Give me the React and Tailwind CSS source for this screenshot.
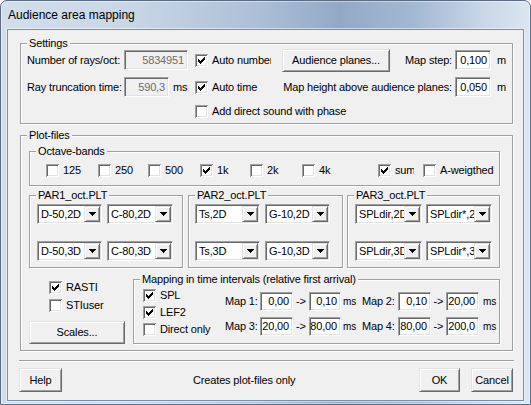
import React from "react";

const SUNKEN =
  "border border-[#a0a0a0] border-r-white border-b-white shadow-[inset_1px_1px_0_#696969,inset_-1px_-1px_0_#e3e3e3]";
const RAISED =
  "border border-[#e3e3e3] border-r-[#696969] border-b-[#696969] shadow-[inset_1px_1px_0_#ffffff,inset_-1px_-1px_0_#a0a0a0]";

const CHECK =
  "M9 3h1v1H9zM8 4h2v1H8zM3 5h1v1H3zM7 5h3v1H7zM3 6h2v1H3zM6 6h3v1H6zM3 7h5v1H3zM4 8h3v1H4zM5 9h1v1H5z";

function Box({ checked }) {
  return (
    <svg width="13" height="13" viewBox="0 0 13 13" shapeRendering="crispEdges" className="block shrink-0">
      <rect width="13" height="13" fill="#ffffff" />
      <path d="M0 0h13v1H1v12H0z" fill="#a0a0a0" />
      <path d="M1 1h11v1H2v10H1z" fill="#696969" />
      <path d="M11 2h1v10H2v-1h9z" fill="#e3e3e3" />
      {checked && <path d={CHECK} fill="#000000" />}
    </svg>
  );
}

function Chk({ checked, label, className = "", labelClass = "" }) {
  return (
    <div className={"flex items-center shrink-0 " + className}>
      <Box checked={checked} />
      <span className={"ml-[4px] whitespace-nowrap leading-[13px] " + labelClass}>{label}</span>
    </div>
  );
}

function Edit({ value, className = "" }) {
  return (
    <div
      className={
        SUNKEN +
        " flex items-center justify-end pr-[3px] leading-[13px] whitespace-nowrap overflow-hidden shrink-0 " +
        className
      }
    >
      {value}
    </div>
  );
}

function Arrow() {
  return (
    <svg width="7" height="4" viewBox="0 0 7 4" shapeRendering="crispEdges" className="block">
      <path d="M0 0h7v1H0zM1 1h5v1H1zM2 2h3v1H2zM3 3h1v1H3z" fill="#000000" />
    </svg>
  );
}

function Combo({ text, className = "" }) {
  return (
    <div className={SUNKEN + " flex h-[20px] bg-white p-[1px] shrink-0 " + className}>
      <div className="flex-1 overflow-hidden whitespace-nowrap pl-[2px] leading-[16px]">{text}</div>
      <div className={RAISED + " w-[16px] h-[16px] flex items-center justify-center bg-[#f0f0f0] shrink-0"}>
        <Arrow />
      </div>
    </div>
  );
}

function Button({ children, className = "" }) {
  return (
    <div
      className={
        RAISED + " flex items-center justify-center bg-[#f0f0f0] shrink-0 leading-[13px] whitespace-nowrap " + className
      }
    >
      {children}
    </div>
  );
}

function Group({ label, className = "", children }) {
  return (
    <div
      className={
        "relative shrink-0 border border-[#a0a0a0] shadow-[1px_1px_0_#ffffff,inset_1px_1px_0_#ffffff] " + className
      }
    >
      <span className="absolute left-[6px] top-[-7px] bg-[#f0f0f0] px-[2px] leading-[13px] whitespace-nowrap">
        {label}
      </span>
      {children}
    </div>
  );
}

function MapRow({ a, b, c, d, e, f }) {
  return (
    <div className="flex items-center h-[19px] whitespace-nowrap">
      <span className="w-[35px] shrink-0">{a}</span>
      <Edit value={b} className="w-[33px] h-[19px] bg-white" />
      <span className="w-[16px] text-center shrink-0">-&gt;</span>
      <Edit value={c} className="w-[32px] h-[19px] bg-white" />
      <span className="w-[21px] pl-[2px] shrink-0 text-[10px]">ms</span>
      <span className="w-[36px] shrink-0">{d}</span>
      <Edit value={e} className="w-[33px] h-[19px] bg-white" />
      <span className="w-[15px] text-center shrink-0">-&gt;</span>
      <Edit value={f} className="w-[33px] h-[19px] bg-white" />
      <span className="pl-[4px] shrink-0 text-[10px]">ms</span>
    </div>
  );
}

export default function App() {
  return (
    <div className="w-[531px] h-[405px] bg-white text-[11px] leading-[13px] tracking-[-0.15px] text-black font-['Liberation_Sans',Arial,sans-serif]">
      <div className="w-[531px] h-[405px] rounded-t-[7px] border border-[#5b6b82] shadow-[inset_0_0_0_1px_rgba(255,255,255,0.45)] bg-[linear-gradient(90deg,#d3deeb_0%,#c8d6e6_25%,#adc0d7_48%,#92a9c6_64%,#a3b8d2_78%,#c8d6e7_91%,#dce6f1_100%)] px-[6px] pb-[3px] flex flex-col">
        <div className="h-[28px] flex items-center pl-[1px] text-[12px] leading-[15px] tracking-normal text-[#000000] whitespace-nowrap">
          Audience area mapping
        </div>
        <div className="h-[372px] border border-[#7c8ea6] shadow-[0_0_0_1px_rgba(255,255,255,0.5)] bg-[#f0f0f0] flex flex-col pt-[13px]">
          {/* Settings */}
          <Group label="Settings" className="ml-[12px] w-[493px] h-[81px]">
            <div className="flex items-center h-[24px] mt-[4px] pl-[6px] whitespace-nowrap">
              <span className="w-[97px] shrink-0">Number of rays/oct:</span>
              <Edit value="5834951" className="w-[64px] h-[20px] bg-[#f0f0f0] text-[#6d6d6d]" />
              <div className="ml-[7px] w-[76px] overflow-hidden shrink-0">
                <Chk checked label="Auto number" />
              </div>
              <Button className="ml-[11px] w-[108px] h-[23px]">Audience planes...</Button>
              <span className="w-[65px] flex justify-end pr-[3px] shrink-0">Map step:</span>
              <Edit value="0,100" className="w-[36px] h-[20px] bg-white" />
              <span className="ml-[6px] shrink-0">m</span>
            </div>
            <div className="flex items-center h-[20px] mt-[5px] pl-[6px] whitespace-nowrap">
              <span className="w-[97px] shrink-0">Ray truncation time:</span>
              <Edit value="590,3" className="w-[45px] h-[20px] bg-[#f0f0f0] text-[#6d6d6d]" />
              <span className="w-[26px] pl-[4px] shrink-0">ms</span>
              <Chk checked label="Auto time" className="w-[87px]" />
              <span className="w-[173px] flex justify-end pr-[3px] shrink-0">Map height above audience planes:</span>
              <Edit value="0,050" className="w-[36px] h-[20px] bg-white" />
              <span className="ml-[6px] shrink-0">m</span>
            </div>
            <div className="flex items-center h-[16px] mt-[6px] pl-[174px]">
              <Chk label="Add direct sound with phase" />
            </div>
          </Group>

          {/* Plot-files */}
          <Group label="Plot-files" className="ml-[12px] mt-[11px] w-[493px] h-[216px]">
            <Group label="Octave-bands" className="ml-[8px] mt-[15px] w-[471px] h-[35px]">
              <div className="flex items-center h-[13px] mt-[12px] pl-[16px]">
                <Chk label="125" className="w-[52px]" />
                <Chk label="250" className="w-[50px]" />
                <Chk label="500" className="w-[52px]" />
                <Chk checked label="1k" className="w-[50px]" />
                <Chk label="2k" className="w-[52px]" />
                <Chk label="4k" className="w-[76px]" />
                <Chk checked label="sum" className="w-[45px]" labelClass="w-[19px] overflow-hidden" />
                <Chk label="A-weigthed" />
              </div>
            </Group>

            <div className="flex ml-[8px] mt-[9px] h-[73px]">
              <Group label="PAR1_oct.PLT" className="w-[154px] h-[73px]">
                <div className="flex mt-[8px] pl-[7px]">
                  <Combo text="D-50,2D" className="w-[65px]" />
                  <Combo text="C-80,2D" className="ml-[5px] w-[66px]" />
                </div>
                <div className="flex mt-[17px] pl-[7px]">
                  <Combo text="D-50,3D" className="w-[65px]" />
                  <Combo text="C-80,3D" className="ml-[5px] w-[66px]" />
                </div>
              </Group>
              <Group label="PAR2_oct.PLT" className="ml-[5px] w-[155px] h-[73px]">
                <div className="flex mt-[8px] pl-[6px]">
                  <Combo text="Ts,2D" className="w-[65px]" />
                  <Combo text="G-10,2D" className="ml-[5px] w-[65px]" />
                </div>
                <div className="flex mt-[17px] pl-[6px]">
                  <Combo text="Ts,3D" className="w-[65px]" />
                  <Combo text="G-10,3D" className="ml-[5px] w-[65px]" />
                </div>
              </Group>
              <Group label="PAR3_oct.PLT" className="ml-[4px] w-[153px] h-[73px]">
                <div className="flex mt-[8px] pl-[7px]">
                  <Combo text="SPLdir,2D" className="w-[67px]" />
                  <Combo text="SPLdir*,2D" className="ml-[4px] w-[66px]" />
                </div>
                <div className="flex mt-[17px] pl-[7px]">
                  <Combo text="SPLdir,3D" className="w-[67px]" />
                  <Combo text="SPLdir*,3D" className="ml-[4px] w-[66px]" />
                </div>
              </Group>
            </div>

            <div className="flex">
              <div className="ml-[8px] w-[96px] pt-[10px] flex flex-col shrink-0">
                <Chk checked label="RASTI" className="h-[18px] pl-[20px]" />
                <Chk label="STIuser" className="h-[18px] pl-[20px]" />
                <Button className="mt-[7px] w-[96px] h-[23px]">Scales...</Button>
              </div>
              <Group
                label="Mapping in time intervals (relative first arrival)"
                className="ml-[8px] mt-[11px] w-[367px] h-[65px] flex"
              >
                <div className="w-[91px] pl-[9px] pt-[7px] flex flex-col shrink-0">
                  <Chk checked label="SPL" className="h-[17px]" />
                  <Chk checked label="LEF2" className="h-[17px]" />
                  <Chk label="Direct only" className="h-[17px]" />
                </div>
                <div className="pt-[12px] flex flex-col gap-[6px]">
                  <MapRow a="Map 1:" b="0,00" c="0,10" d="Map 2:" e="0,10" f="20,00" />
                  <MapRow a="Map 3:" b="20,00" c="80,00" d="Map 4:" e="80,00" f="200,0" />
                </div>
              </Group>
            </div>
          </Group>

          <div className="ml-[11px] mt-[9px] w-[495px] h-[2px] border-t border-b border-t-[#a0a0a0] border-b-white" />

          <div className="flex items-center mt-[6px] h-[24px]">
            <Button className="ml-[11px] w-[43px] h-[24px]">Help</Button>
            <span className="ml-[131px] whitespace-nowrap">Creates plot-files only</span>
            <Button className="ml-auto w-[41px] h-[24px]">OK</Button>
            <Button className="ml-[11px] mr-[10px] w-[42px] h-[24px]">Cancel</Button>
          </div>
        </div>
      </div>
    </div>
  );
}
